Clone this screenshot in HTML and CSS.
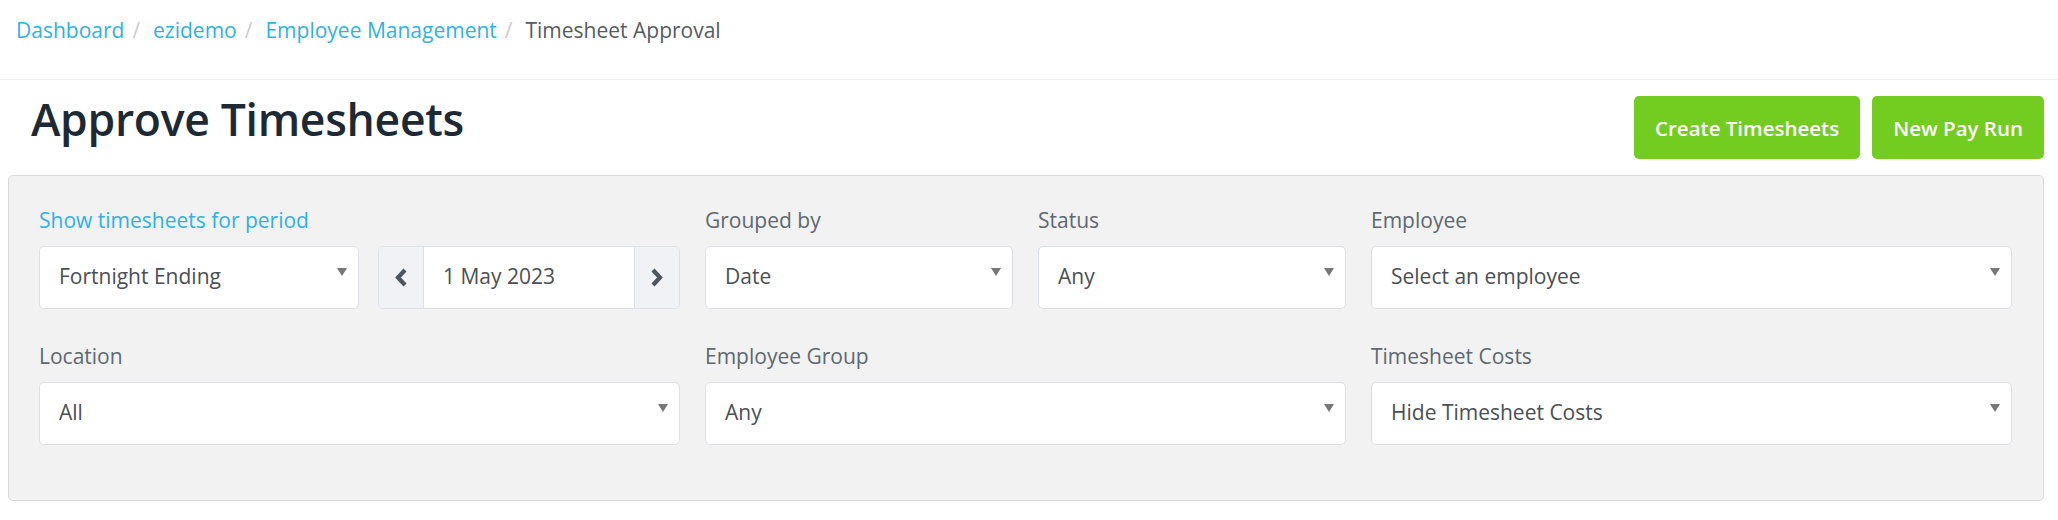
FILE: index.html
```html
<!DOCTYPE html>
<html lang="en">
<head>
    <meta charset="UTF-8">
    <title>Timesheet Approval</title>
    <link rel="stylesheet" href="styles.css">
</head>
<body>
    <div class="topbar">
        <ol class="breadcrumb">
            <li><a href="#">Dashboard</a></li>
            <li><a href="#">ezidemo</a></li>
            <li><a href="#">Employee Management</a></li>
            <li class="active">Timesheet Approval</li>
        </ol>
    </div>

    <div class="page-header">
        <h1>Approve Timesheets</h1>
        <div class="actions">
            <button class="btn btn-green">Create Timesheets</button>
            <button class="btn btn-green">New Pay Run</button>
        </div>
    </div>

    <div class="filters">
        <div class="field span-2">
            <label class="period-label">Show timesheets for period</label>
            <div class="period">
                <div class="select">
                    <span>Fortnight Ending</span>
                    <i class="caret"></i>
                </div>
                <div class="date-group">
                    <button class="addon">
                        <svg width="14" height="19" viewBox="0 0 14 19"><polyline points="11,2 4,9.5 11,17" fill="none" stroke="#4b5660" stroke-width="4.2"/></svg>
                    </button>
                    <div class="date-input">1 May 2023</div>
                    <button class="addon">
                        <svg width="14" height="19" viewBox="0 0 14 19"><polyline points="3,2 10,9.5 3,17" fill="none" stroke="#4b5660" stroke-width="4.2"/></svg>
                    </button>
                </div>
            </div>
        </div>

        <div class="field">
            <label>Grouped by</label>
            <div class="select"><span>Date</span><i class="caret"></i></div>
        </div>

        <div class="field">
            <label>Status</label>
            <div class="select"><span>Any</span><i class="caret"></i></div>
        </div>

        <div class="field span-2">
            <label>Employee</label>
            <div class="select"><span>Select an employee</span><i class="caret"></i></div>
        </div>

        <div class="field span-2">
            <label>Location</label>
            <div class="select"><span>All</span><i class="caret"></i></div>
        </div>

        <div class="field span-2">
            <label>Employee Group</label>
            <div class="select"><span>Any</span><i class="caret"></i></div>
        </div>

        <div class="field span-2">
            <label>Timesheet Costs</label>
            <div class="select"><span>Hide Timesheet Costs</span><i class="caret"></i></div>
        </div>
    </div>
</body>
</html>
```

FILE: styles.css
```css
body {
    margin: 0;
    padding: 0;
    background-color: #fff;
    font-family: "Open Sans", "Liberation Sans", sans-serif;
    font-size: 21px;
    color: #4a4f54;
}

/* barra do topo com o breadcrumb */
.topbar {
    height: 79px;
    border-bottom: 1px solid #f0f0f0;
}

.breadcrumb {
    list-style: none;
    margin: 0;
    padding: 17px 0 0 16px;
    display: flex;
    line-height: 26px;
}

.breadcrumb li + li:before {
    content: "/";
    color: #ccc;
    padding: 0 13px 0 8px;
}

.breadcrumb a {
    color: #2fb1e8;
    text-decoration: none;
}

.breadcrumb .active {
    color: #555b61;
}

.page-header {
    display: flex;
    justify-content: space-between;
    align-items: flex-start;
    padding: 16px 14px 16px 31px;
}

.page-header h1 {
    margin: 0;
    margin-top: -6px;
    font-size: 44.5px;
    font-weight: 600;
    line-height: 58px;
    color: #1d2a35;
    letter-spacing: -0.3px;
}

.actions {
    display: flex;
    gap: 12px;
}

.btn {
    height: 63px;
    padding: 0 21px;
    border: none;
    border-radius: 5px;
    font-family: inherit;
    font-size: 20.5px;
    font-weight: 600;
    cursor: pointer;
}

.btn-green {
    background-color: #73cc20;
    color: #fff;
}

/* painel de filtros */
.filters {
    margin: 0 14px 0 8px;
    padding: 32px 31px 55px 30px;
    background-color: #f2f2f2;
    border: 1px solid #d9d9d9;
    border-radius: 5px;
    display: grid;
    grid-template-columns: repeat(6, 1fr);
    column-gap: 25px;
    row-gap: 35px;
}

.field.span-2 {
    grid-column: span 2;
}

.field label {
    display: block;
    line-height: 24px;
    margin-bottom: 14px;
    color: #5d6871;
}

.field .period-label {
    color: #2fb1e8;
}

.period {
    display: grid;
    grid-template-columns: 320px 1fr;
    gap: 19px;
}

.select {
    height: 63px;
    box-sizing: border-box;
    background-color: #fff;
    border: 1px solid #dde1e6;
    border-radius: 5px;
    padding: 0 11px 4px 19px;
    display: flex;
    align-items: center;
    justify-content: space-between;
    color: #4a4f54;
}

.caret {
    align-self: flex-start;
    margin-top: 21px;
    width: 0;
    height: 0;
    border-left: 5px solid transparent;
    border-right: 5px solid transparent;
    border-top: 8px solid #777;
}

.date-group {
    display: flex;
    height: 63px;
    box-sizing: border-box;
    border: 1px solid #dde1e6;
    border-radius: 5px;
    overflow: hidden;
}

.date-group .addon {
    width: 44px;
    background-color: #f1f2f5;
    border: none;
    padding: 0;
    display: flex;
    align-items: center;
    justify-content: center;
    cursor: pointer;
}

.date-input {
    flex: 1;
    background-color: #fff;
    border-left: 1px solid #dde1e6;
    border-right: 1px solid #dde1e6;
    padding: 0 0 4px 19px;
    display: flex;
    align-items: center;
}
```
